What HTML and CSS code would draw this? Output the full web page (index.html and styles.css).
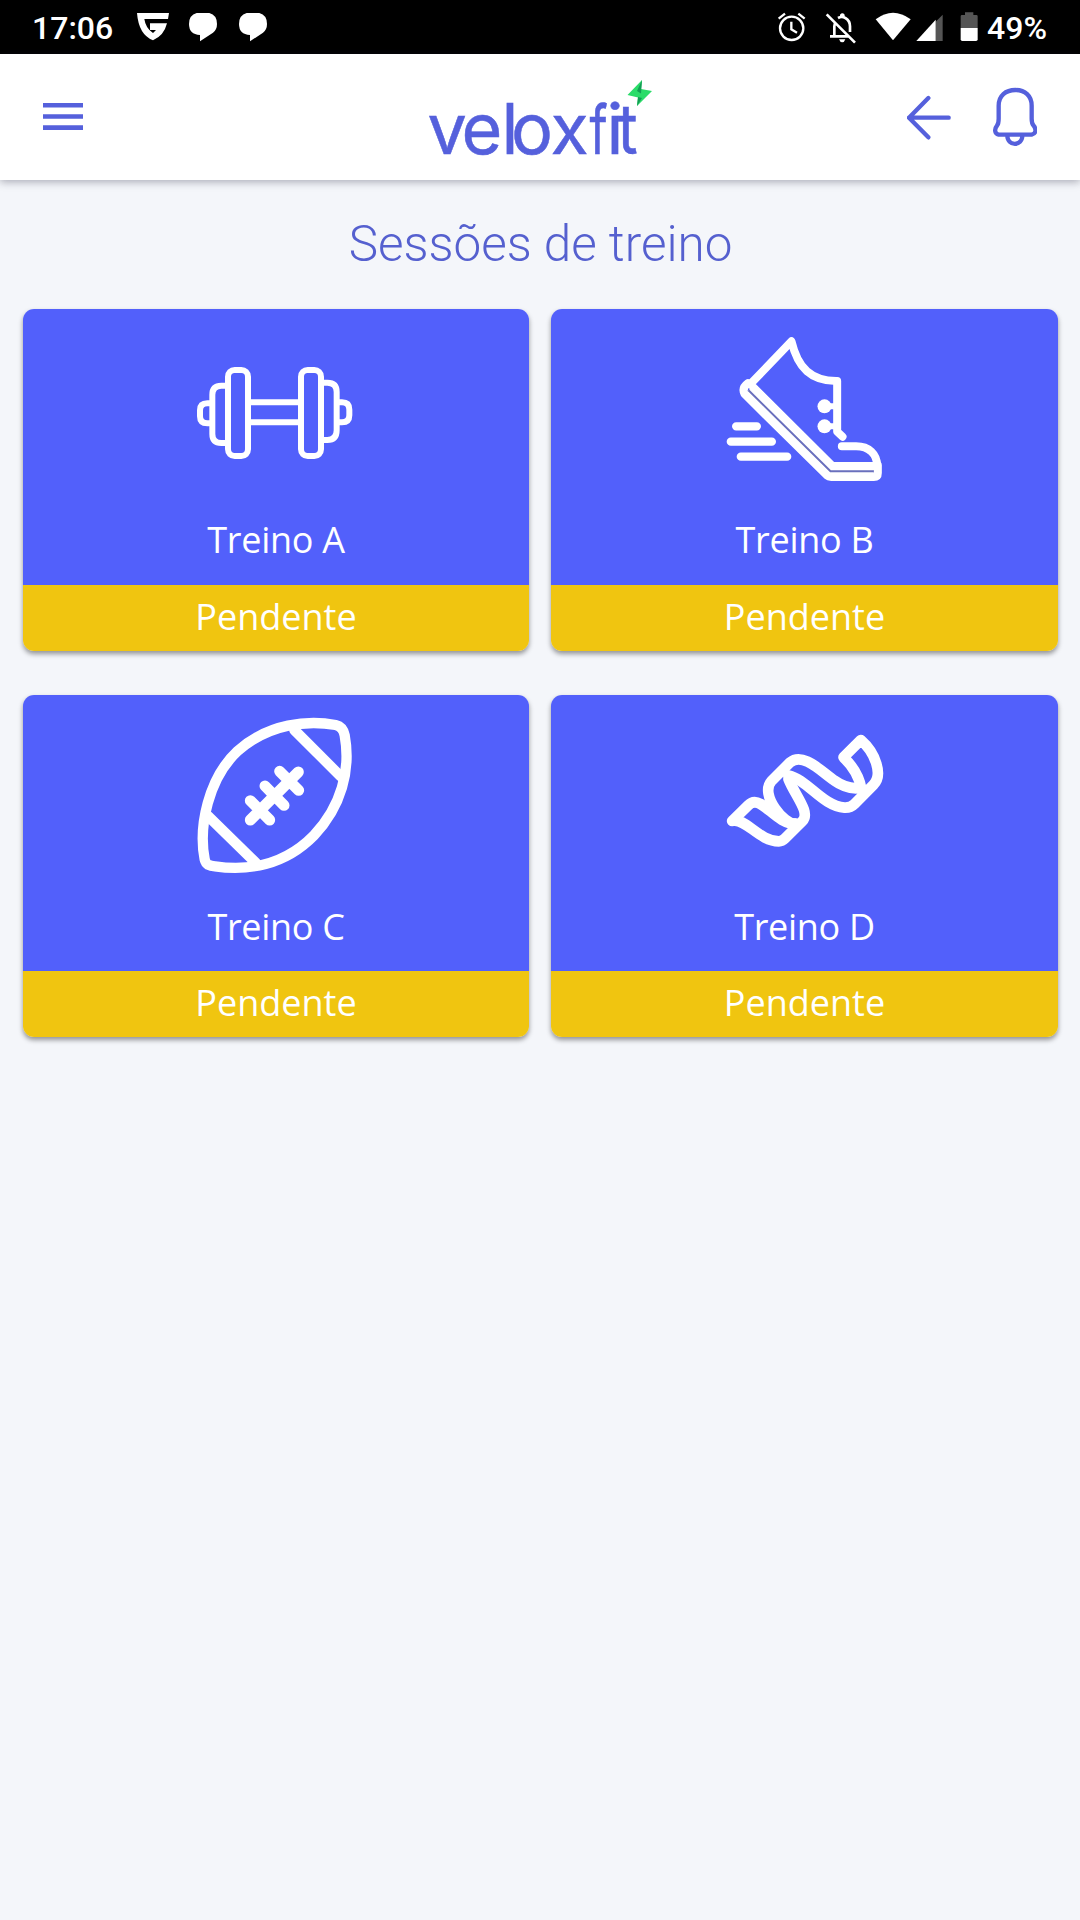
FILE: index.html
```html
<!DOCTYPE html>
<html lang="pt-BR">
<head>
    <meta charset="UTF-8">
    <meta name="viewport" content="width=device-width, initial-scale=1.0">
    <title>veloxfit - Sessões de treino</title>
    <link rel="stylesheet" href="styles.css">
</head>
<body>
    <div class="status-bar">
        <div class="status-left">
            <span class="clock">17:06</span>
            <svg class="status-icons" width="140" height="54" viewBox="390 0 420 162">
                <path fill="#fff" d="M411 39H507L504 57H433Q437 85 459 99L468 90H450V70H501Q492 107 459 121Q416 104 411 39Z"/>
                <path fill="#fff" d="M590 39H628Q651 45 651 72Q651 89 639 98L600 124V105Q567 103 567 72Q567 45 590 39Z"/>
                <path fill="#fff" d="M740 39H778Q801 45 801 72Q801 89 789 98L750 124V105Q717 103 717 72Q717 45 740 39Z"/>
            </svg>
        </div>
        <div class="status-right">
            <svg class="status-icons" width="210" height="54" viewBox="40 0 630 162">
                <!-- alarme -->
                <g fill="none" stroke="#fff" stroke-width="7">
                    <circle cx="96" cy="85" r="35"/>
                    <path d="M95 65V88L112 98M57 56L76 41M116 41L135 56"/>
                </g>
                <!-- silencioso -->
                <g fill="none" stroke="#fff" stroke-width="8">
                    <path d="M201 43L286 128M211 109H266M224 109V79Q224 70 229 67M235 54Q246 48 257 54Q271 62 271 79V96"/>
                </g>
                <path fill="#fff" d="M241 51V44Q248 36 255 44V51ZM238 118H257Q254 127 248 127Q241 127 238 118Z"/>
                <!-- wifi e sinal -->
                <path fill="#fff" d="M348 58Q400 19 453 58L400 121Z"/>
                <path fill="#555" d="M528 65L549 44V123H528Z"/>
                <path fill="#fff" d="M470 123L528 59V123Z"/>
                <!-- bateria -->
                <path fill="#555" d="M603 84V49Q603 45 607 45H616V37H641V45H650Q654 45 654 49V84Z"/>
                <path fill="#fff" d="M603 84H654V118Q654 123 649 123H608Q603 123 603 118Z"/>
            </svg>
            <span class="battery">49%</span>
        </div>
    </div>

    <header class="header">
        <button class="icon-btn menu-btn" aria-label="Menu">
            <svg width="40" height="28" viewBox="0 0 40 28">
                <path fill="#5560dc" d="M0 0H40V4.6H0ZM0 11.2H40V15.8H0ZM0 22.3H40V27H0Z"/>
            </svg>
        </button>
        <svg class="logo" width="260" height="126" viewBox="410 54 260 126">
            <text class="logo-text" x="427.500 461.500 501.500 511 550.500" y="153.5">velox</text>
            <!-- f e t mais estreitos que o resto da marca -->
            <text class="logo-text" transform="translate(589.5 153.5) scale(0.7 0.97)">f</text>
            <text class="logo-text" x="606.5" y="153.5">i</text>
            <text class="logo-text" transform="translate(617.5 153.5) scale(0.88 1)">t</text>
            <path fill="#2bdc69" d="M642 80L627.500 95L638 97.500L637 106L652 91L641 89Z"/>
            <path fill="#139d54" d="M642 80L637 91L641 93.500ZM638 97L637 106L642 98Z"/>
        </svg>
        <div class="header-actions">
            <button class="icon-btn" aria-label="Voltar">
                <svg width="44" height="60" viewBox="441 260 132 180">
                    <path class="line" d="M566 352H447L505 293M447 352L505 411"/>
                </svg>
            </button>
            <button class="icon-btn" aria-label="Notificações">
                <svg width="44" height="60" viewBox="700 260 132 180">
                    <path class="line" d="M717 403C704 400 704 386 712 376Q717 370 717 355V316C717 286 738 269 767 269C796 269 816 286 816 316V355Q816 370 822 376C830 386 830 400 816 403ZM743 405C743 439 788 439 788 405"/>
                </svg>
            </button>
        </div>
    </header>

    <main class="content">
        <h1 class="title">Sessões de treino</h1>
        <div class="sessions">
            <a class="card">
                <div class="card-body">
                    <svg class="card-icon" viewBox="3 -33 570 480">
                        <g fill="none" stroke="#fff" stroke-width="18">
                            <rect x="144" y="90" width="60" height="258" rx="20"/>
                            <rect x="363" y="90" width="60" height="258" rx="20"/>
                            <path d="M204 187H363M204 247H363M144 137H124Q97 137 97 164V282Q97 309 124 309H144M423 128H442Q470 128 470 156V271Q470 300 442 300H423M97 190H82Q60 190 60 211V229Q60 250 82 250H97M470 187H486Q508 187 508 209V226Q508 247 486 247H470"/>
                        </g>
                    </svg>
                    <span class="card-name">Treino A</span>
                </div>
                <div class="card-status">Pendente</div>
            </a>
            <a class="card">
                <div class="card-body">
                    <svg class="card-icon" viewBox="-1.5 27 570 480">
                        <g fill="none" stroke="#fff" stroke-width="24" stroke-linecap="round" stroke-linejoin="round">
                            <path d="M125 198L366 438H500C500 402 475 379 437 379H394M119 193L243 64C262 144 302 184 380 183V335L396 350"/>
                            <path d="M112 190Q93 204 102 222L351 468Q354 471 362 471H490Q502 471 502 459V436"/>
                            <path stroke-width="25" d="M77 319H139M61 365H184M91 410H230"/>
                            <path stroke-width="18" d="M342 259H372M342 319H372"/>
                        </g>
                        <path fill="none" stroke="#fff" stroke-width="14" d="M114 211L360 454H490"/>
                        <path fill="none" stroke="#6a70bd" stroke-width="6" d="M114 211L360 454H490"/>
                        <circle cx="342" cy="259" r="21" fill="#fff"/>
                        <circle cx="342" cy="319" r="21" fill="#fff"/>
                    </svg>
                    <span class="card-name">Treino B</span>
                </div>
                <div class="card-status">Pendente</div>
            </a>
            <a class="card">
                <div class="card-body">
                    <svg class="card-icon" viewBox="3 45 570 480">
                        <g fill="none" stroke="#fff" stroke-width="31" stroke-linecap="round" stroke-linejoin="round">
                            <path d="M84 494Q77 490 74 478C55 380 85 235 172 154C266 69 386 60 467 75Q489 80 494 106C513 210 484 320 402 406C313 497 202 513 105 499Q92 498 84 494Z"/>
                            <path d="M343 90L482 229M84 348L228 489"/>
                            <path stroke-width="33" d="M211 360L355 216M299 214L356 271M255 258L312 316M211 302L269 360"/>
                        </g>
                    </svg>
                    <span class="card-name">Treino C</span>
                </div>
                <div class="card-status">Pendente</div>
            </a>
            <a class="card">
                <div class="card-body">
                    <svg class="card-icon" viewBox="-1.5 15 570 480">
                        <g fill="none" stroke="#fff" stroke-width="32" stroke-linecap="round" stroke-linejoin="round">
                            <path d="M65 333L113 286Q129 270 150 282C181 299 210 341 254 341M65 333C104 321 145 394 205 394Q215 394 224 385L276 333C301 307 252 254 234 207"/>
                            <path d="M254 341C222 345 146 254 183 213L239 157C278 125 335 187 371 211Q401 233 437 235M234 196C291 209 335 287 402 293Q420 294 432 282L489 224C518 195 495 128 451 90L399 142C430 171 447 203 453 238"/>
                        </g>
                    </svg>
                    <span class="card-name">Treino D</span>
                </div>
                <div class="card-status">Pendente</div>
            </a>
        </div>
    </main>
</body>
</html>
```
FILE: styles.css
```css
* {
    box-sizing: border-box;
}

body {
    margin: 0;
    min-height: 100vh;
    background: #f4f6fa;
    font-family: "Open Sans", "Noto Sans", sans-serif;
}

.status-bar {
    display: flex;
    justify-content: space-between;
    height: 54px;
    padding: 0 33px 0 32px;
    background: #000;
    color: #fff;
    font-family: Roboto, sans-serif;
    font-size: 32px;
    font-weight: 500;
    line-height: 56px;
}

.status-left,
.status-right {
    display: flex;
}

.status-icons {
    display: block;
}

.status-left .status-icons {
    margin-left: 17px;
}

.status-right .status-icons {
    margin-right: 4px;
}

.header {
    display: grid;
    grid-template-columns: 1fr 260px 1fr;
    align-items: center;
    height: 126px;
    padding: 0 43px;
    background: #fff;
    box-shadow: 0 2px 8px rgba(40, 40, 60, 0.36);
}

.icon-btn {
    display: block;
    padding: 0;
    border: none;
    background: none;
    cursor: pointer;
}

.icon-btn svg {
    display: block;
}

.logo-text {
    fill: #5560dc;
    stroke: #5560dc;
    stroke-width: 0.5;
    font-family: Inter, sans-serif;
    font-size: 70px;
    font-weight: 400;
}

.header-actions {
    display: flex;
    justify-content: flex-end;
    gap: 42px;
}

.line {
    fill: none;
    stroke: #5560dc;
    stroke-width: 13;
    stroke-linecap: round;
    stroke-linejoin: round;
}

.content {
    padding: 34px 22px 0 23px;
}

.title {
    margin: 0 0 35px;
    color: #5560cf;
    font-family: Roboto, sans-serif;
    font-size: 49.4px;
    font-weight: 300;
    line-height: 60px;
    text-align: center;
}

.sessions {
    display: grid;
    grid-template-columns: 506px 507px;
    gap: 44.9px 22px;
}

.card {
    display: block;
    border-radius: 11px;
    overflow: hidden;
    box-shadow: 0 3px 5px rgba(0, 0, 0, 0.4);
    color: #fff;
    font-size: 36px;
    text-align: center;
}

.card-body {
    height: 276px;
    padding-top: 20px;
    background: #5260fb;
}

.card-icon {
    display: block;
    width: 190px;
    height: 160px;
    margin: 0 auto 26.2px;
}

.card-name {
    display: block;
    letter-spacing: -0.3px;
    line-height: 50px;
}

.card-status {
    height: 65.5px;
    background: #f0c510;
    line-height: 64.4px;
}
```
